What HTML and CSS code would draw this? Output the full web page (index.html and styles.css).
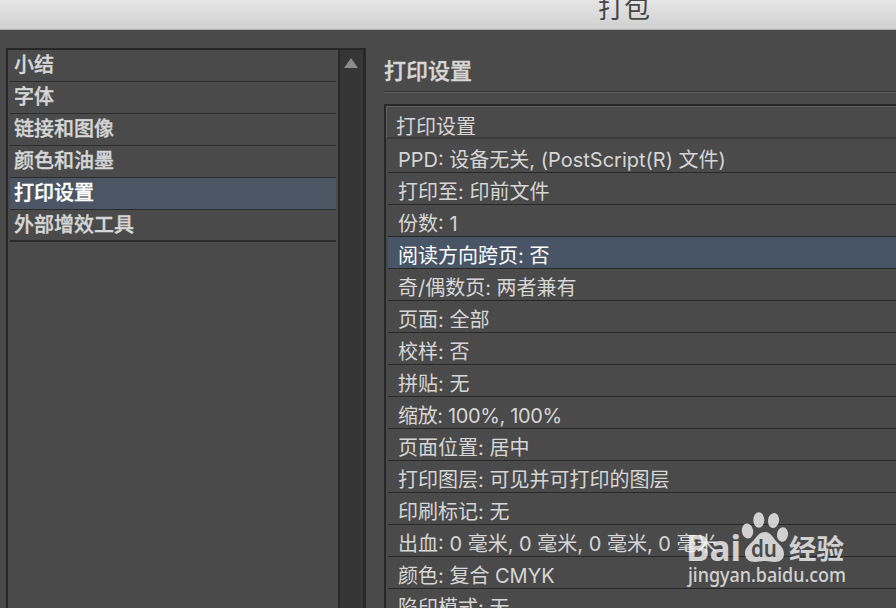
FILE: index.html
```html
<!DOCTYPE html>
<html lang="zh-CN">
<head>
<meta charset="utf-8">
<title>打包</title>
<link rel="stylesheet" href="styles.css">
</head>
<body>
<header class="titlebar"><span>打包</span></header>
<main class="content">
  <nav class="sidebar">
    <ul class="nav-list">
      <li>小结</li>
      <li>字体</li>
      <li>链接和图像</li>
      <li>颜色和油墨</li>
      <li class="active">打印设置</li>
      <li>外部增效工具</li>
    </ul>
    <div class="scrollbar"><svg width="14" height="10" viewBox="0 0 14 10"><path d="M7 0 14 10H0z" fill="#8b8b8b"/></svg></div>
  </nav>
  <section class="details">
    <h1>打印设置</h1>
    <div class="table">
      <div class="table-head">打印设置</div>
      <ul class="rows">
        <li>PPD: 设备无关, (PostScript(R) 文件)</li>
        <li>打印至: 印前文件</li>
        <li>份数: 1</li>
        <li class="active">阅读方向跨页: 否</li>
        <li>奇/偶数页: 两者兼有</li>
        <li>页面: 全部</li>
        <li>校样: 否</li>
        <li>拼贴: 无</li>
        <li class="scale">缩放: 100%, 100%</li>
        <li>页面位置: 居中</li>
        <li>打印图层: 可见并可打印的图层</li>
        <li>印刷标记: 无</li>
        <li>出血: 0 毫米, 0 毫米, 0 毫米, 0 毫米</li>
        <li>颜色: 复合 CMYK</li>
        <li>陷印模式: 无</li>
      </ul>
    </div>
  </section>
</main>
<svg class="watermark" width="176" height="88" viewBox="680 508 176 88">
  <g class="mark">
    <text class="brand" x="686" y="561" textLength="55" lengthAdjust="spacingAndGlyphs">Bai</text>
    <ellipse cx="747.5" cy="531" rx="5.7" ry="7.5" transform="rotate(-8 747.5 531)"/>
    <ellipse cx="758.8" cy="520" rx="5.5" ry="7.8"/>
    <ellipse cx="773.5" cy="520.5" rx="5.5" ry="7.5" transform="rotate(10 773.5 520.5)"/>
    <ellipse cx="782.5" cy="534.5" rx="5.5" ry="7.3" transform="rotate(8 782.5 534.5)"/>
    <path d="M765 532C770 532 773 537 776 541C780 545 784 548 784 554C784 559 780 562 775 562C771 562 769 561 765 561C761 561 758 562 755 562C749 562 745 559 745 553C745 548 749 545 753 541C757 537 759 532 765 532Z"/>
    <text class="du" x="751" y="557" textLength="26" lengthAdjust="spacingAndGlyphs">du</text>
    <text class="jingyan" x="789" y="559" textLength="55" lengthAdjust="spacingAndGlyphs">经验</text>
    <text class="url" x="688" y="582" textLength="158" lengthAdjust="spacingAndGlyphs">jingyan.baidu.com</text>
  </g>
</svg>
</body>
</html>
```
FILE: styles.css
```css
* { box-sizing: border-box; }
body {
  margin: 0;
  height: 608px;
  overflow: hidden;
  display: flex;
  flex-direction: column;
  background: #4a4a4a;
  color: #d6d6d6;
  font-family: Inter, "Noto Sans CJK SC", sans-serif;
  font-size: 20px;
}
ul { list-style: none; margin: 0; padding: 0; }
.titlebar {
  flex: none;
  height: 30px;
  overflow: hidden;
  padding-left: 598px;
  background: linear-gradient(#e6e6e6, #d0d0d0);
  border-bottom: 1px solid #acacac;
  color: #464646;
  font-size: 26px;
  line-height: 40px;
}
.titlebar span { display: block; margin-top: -11px; }
.content { flex: 1; min-height: 0; display: flex; gap: 18px; padding: 18px 0 0 6px; }
.sidebar {
  flex: none;
  width: 360px;
  display: flex;
  justify-content: space-between;
  border: 2px solid #272727;
  border-bottom: 0;
}
.nav-list { width: 328px; padding-left: 2px; font-weight: 500; -webkit-text-stroke: .35px; }
.nav-list li { height: 32px; padding-left: 4px; line-height: 31px; border-bottom: 1px solid #2c2c2c; }
.nav-list .active { background: #4b5563; color: #fff; }
.nav-list li:last-child { border-bottom-width: 2px; }
.scrollbar {
  width: 26px;
  padding: 8px 0 0 4px;
  background: #353535;
  border-left: 2px solid #292929;
  border-right: 1px solid #2b2b2b;
}
.scrollbar svg { display: block; }
.details { flex: 1; min-width: 0; display: flex; flex-direction: column; gap: 12px; }
h1 {
  margin: 0;
  height: 44px;
  flex: none;
  border-bottom: 1px solid #353535;
  box-shadow: 0 1px #606060;
  font-size: 22px;
  font-weight: 500;
  line-height: 46px;
  -webkit-text-stroke: .35px;
}
.table { flex: 1; min-height: 0; overflow: hidden; border: solid #272727; border-width: 2px 0 0 2px; }
.table-head {
  height: 33px;
  padding-left: 9px;
  border-top: 1px solid #606060;
  border-left: 1px solid #606060;
  border-bottom: 2px solid #3c3c3c;
  line-height: 40px;
}
.rows { padding-left: 2px; }
.rows li { height: 32px; padding-left: 10px; border-bottom: 1px solid #282828; line-height: 38px; white-space: nowrap; }
.rows li:first-child { height: 34px; line-height: 42px; }
.rows .active { background: #485567; color: #fff; }
.rows .scale { letter-spacing: -.35px; }
.watermark { position: absolute; left: 680px; top: 508px; }
.mark { fill: #fff; opacity: .75; }
.brand { font: 700 35px "Noto Sans", sans-serif; }
.du { font: 600 24px "Noto Sans", sans-serif; fill: #4a4a4a; }
.jingyan { font: 700 27px "Noto Sans CJK SC", sans-serif; }
.url { font: 500 19px "Noto Sans", sans-serif; }
```
